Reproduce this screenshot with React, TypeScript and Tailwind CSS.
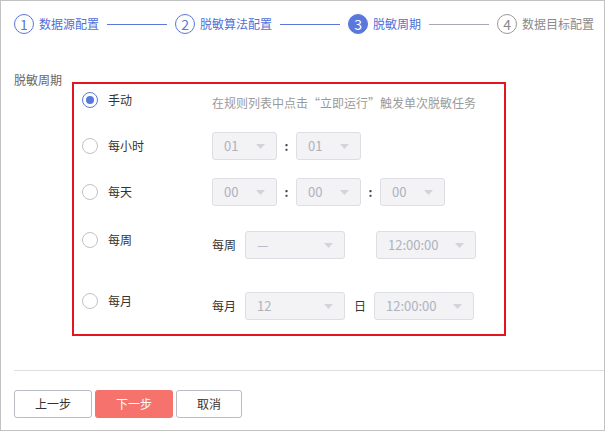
import React from "react";

const font = { fontFamily: '"Noto Sans CJK SC", "Noto Sans", sans-serif' };

type StepProps = { index: number; label: string; state: "done" | "active" | "todo" };

function Step({ index, label, state }: StepProps) {
  const circle =
    state === "active"
      ? "bg-[#5a78dc] border-[#5a78dc] text-white"
      : state === "done"
        ? "border-[#5a78dc] text-[#5a78dc]"
        : "border-[#9a9a9a] text-[#8a8a8a]";
  const text = state === "todo" ? "text-[#8a8a8a]" : "text-[#4f6fd6]";
  return (
    <div className="flex items-center">
      <div
        className={`w-5 h-5 rounded-full border flex items-center justify-center text-[14px] leading-none ${circle}`}
      >
        {index}
      </div>
      <span className={`ml-[5px] text-[12px] leading-5 ${text}`}>{label}</span>
    </div>
  );
}

function StepLine({ active }: { active: boolean }) {
  return <div className={`mx-2 w-[60px] h-px ${active ? "bg-[#5a78dc]" : "bg-[#a8a8b4]"}`} />;
}

function Select({ value, width }: { value: string; width: string }) {
  return (
    <div
      className={`${width} h-[28px] rounded-[3px] border border-[#dcdee4] bg-[#f3f3f5] flex items-center justify-between pl-[11px] pr-[11px]`}
    >
      <span className="text-[13px] text-[#aeb2bf]">{value}</span>
      <svg width="9" height="5" viewBox="0 0 9 5">
        <path d="M0 0h9L4.5 5z" fill="#d2d4da" />
      </svg>
    </div>
  );
}

function Radio({ checked, label }: { checked?: boolean; label: string }) {
  return (
    <div className="flex items-center w-[130px]">
      <div
        className={`w-4 h-4 rounded-full border flex items-center justify-center bg-white ${
          checked ? "border-[#5a78dc]" : "border-[#bfc2c8]"
        }`}
      >
        {checked && <div className="w-2 h-2 rounded-full bg-[#5a78dc]" />}
      </div>
      <span className="ml-[10px] text-[12px] text-[#333]">{label}</span>
    </div>
  );
}

const Colon = () => <span className="w-[19px] text-center text-[12px] font-bold text-[#444]">:</span>;

export default function App() {
  return (
    <div style={font} className="w-[605px] h-[431px] bg-white border border-[#c2c2c2] flex flex-col">
      {/* wizard steps */}
      <div className="flex items-center pl-[13px] pt-[13px]">
        <Step index={1} label="数据源配置" state="done" />
        <StepLine active />
        <Step index={2} label="脱敏算法配置" state="done" />
        <StepLine active />
        <Step index={3} label="脱敏周期" state="active" />
        <StepLine active={false} />
        <Step index={4} label="数据目标配置" state="todo" />
      </div>

      {/* schedule form */}
      <div className="flex pl-[13px] mt-[48px]">
        <span className="w-[58px] text-[12px] text-[#666] leading-4 -mt-[10px]">脱敏周期</span>
        <div className="w-[434px] h-[254px] border-2 border-[#e5151f] pl-[8px] flex flex-col">
          <div className="flex items-center h-[28px] mt-[2px]">
            <Radio checked label="手动" />
            <span className="text-[12px] text-[#9a9a9a] mt-[5px]">在规则列表中点击“立即运行”触发单次脱敏任务</span>
          </div>
          <div className="flex items-center h-[28px] mt-[18px]">
            <Radio label="每小时" />
            <Select value="01" width="w-[65px]" />
            <Colon />
            <Select value="01" width="w-[65px]" />
          </div>
          <div className="flex items-center h-[28px] mt-[18px]">
            <Radio label="每天" />
            <Select value="00" width="w-[65px]" />
            <Colon />
            <Select value="00" width="w-[65px]" />
            <Colon />
            <Select value="00" width="w-[65px]" />
          </div>
          <div className="flex items-center h-[28px] mt-[25px]">
            <div className="-mt-[10px]">
              <Radio label="每周" />
            </div>
            <span className="text-[12px] text-[#333] w-[33px]">每周</span>
            <Select value="—" width="w-[100px]" />
            <div className="w-[31px]" />
            <Select value="12:00:00" width="w-[100px]" />
          </div>
          <div className="flex items-center h-[28px] mt-[33px]">
            <div className="-mt-[10px]">
              <Radio label="每月" />
            </div>
            <span className="text-[12px] text-[#333] w-[33px]">每月</span>
            <Select value="12" width="w-[100px]" />
            <span className="text-[12px] text-[#333] ml-[9px] mr-[8px]">日</span>
            <Select value="12:00:00" width="w-[100px]" />
          </div>
        </div>
      </div>

      <div className="ml-[13px] mt-[34px] h-px bg-[#dedede]" />

      {/* footer actions */}
      <div className="flex pl-[13px] mt-[19px] gap-[3px]">
        <button className="w-[78px] h-[28px] rounded-[3px] border border-[#b9bcc4] bg-white text-[12px] text-[#333]">
          上一步
        </button>
        <button className="w-[78px] h-[28px] rounded-[3px] bg-[#f6736d] text-[12px] text-white">
          下一步
        </button>
        <button className="w-[66px] h-[28px] rounded-[3px] border border-[#b9bcc4] bg-white text-[12px] text-[#333]">
          取消
        </button>
      </div>
    </div>
  );
}
